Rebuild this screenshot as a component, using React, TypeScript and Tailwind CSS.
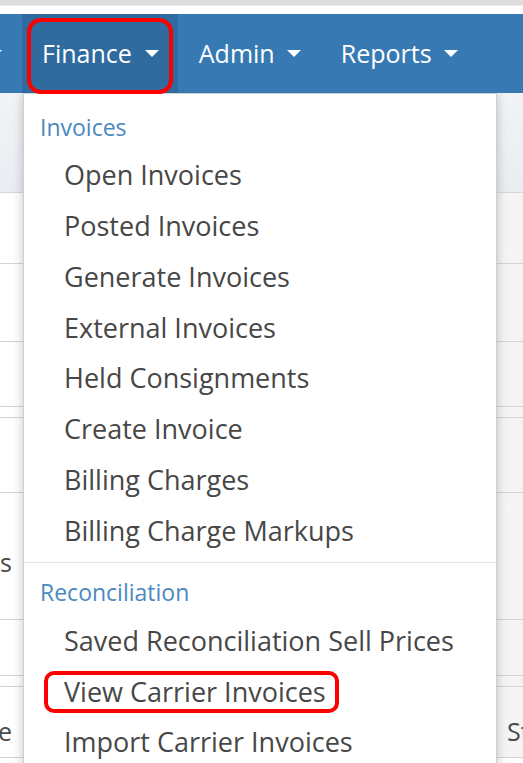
import React from 'react'

const invoiceItems = [
  'Open Invoices',
  'Posted Invoices',
  'Generate Invoices',
  'External Invoices',
  'Held Consignments',
  'Create Invoice',
  'Billing Charges',
  'Billing Charge Markups',
]

const reconciliationItems = [
  'Saved Reconciliation Sell Prices',
  'View Carrier Invoices',
  'Import Carrier Invoices',
]

// background table rows behind the menu
const rows: Array<{ h: string; left?: string; right?: string }> = [
  { h: 'h-[71px]' },
  { h: 'h-[78px]' },
  { h: 'h-[65px]' },
  { h: 'h-[11px]' },
  { h: 'h-[75px]' },
  { h: 'h-[127px] pt-[14px]', left: 'Charges' },
  { h: 'h-[56px]' },
  { h: 'h-[11px]' },
  { h: 'h-[71px] pt-[20px]', left: 'Price', right: 'Status' },
]

function Caret() {
  return <span className="inline-block w-0 h-0 border-x-[7px] border-x-transparent border-t-[7px] border-t-white" />
}

export default function App() {
  return (
    <div className="relative w-[523px] h-[763px] overflow-hidden bg-white font-['Open_Sans',sans-serif]">
      {/* browser chrome strip */}
      <div className="h-[5px] bg-[#dedede]" />
      <div className="h-[9px] bg-white border-t border-[#ececec]" />

      {/* navbar */}
      <div className="relative z-30 h-[79px] bg-[#377ab3] flex items-stretch text-white text-[25px] ml-[-12px]">
        <div className="flex items-center pr-[20px]">
          <Caret />
        </div>
        <div className="relative flex items-center gap-[13px] pl-[20px] pr-[19px] bg-[#2f6b9e]">
          <span>Finance</span>
          <Caret />
          <div className="absolute left-[5px] right-[5px] top-[4px] bottom-[-1px] border-4 border-[#ff0000] rounded-[14px]" />
        </div>
        <div className="flex items-center gap-[12px] pl-[21px] pr-[20px]">
          <span>Admin</span>
          <Caret />
        </div>
        <div className="flex items-center gap-[12px] px-[20px]">
          <span>Reports</span>
          <Caret />
        </div>
      </div>

      {/* table underneath */}
      <div className="h-[100px] bg-gradient-to-b from-[#f1f3f6] to-[#e9ecf1] border-b border-[#d6d8dc]" />
      {rows.map((r, i) => (
        <div key={i} className={`${r.h} flex border-b border-[#d4d4d4] bg-gradient-to-r from-white to-[#f4f4f4] text-[25px] text-[#4a4a4a]`}>
          <div className="w-[12px] shrink-0 flex items-center justify-end whitespace-nowrap">
            {r.left && <span>{r.left}</span>}
          </div>
          <div className="flex-1" />
          <div className="w-[16px] shrink-0 flex items-center whitespace-nowrap overflow-hidden">
            {r.right && <span>{r.right}</span>}
          </div>
        </div>
      ))}

      {/* dropdown menu */}
      <div className="absolute z-20 left-[23px] top-[93px] w-[474px] h-[700px] bg-white border border-[#cfcfcf] shadow-[0_0_10px_rgba(0,0,0,0.22)] pt-[10px]">
        <div className="h-[46px] flex items-center pl-[16px] text-[23px] text-[#4a89c0]">Invoices</div>
        {invoiceItems.map(item => (
          <div key={item} className="h-[50.8px] flex items-center pl-[40px] text-[27px] text-[#474747]">
            {item}
          </div>
        ))}
        <div className="my-[6px] h-px bg-[#e5e5e5]" />
        <div className="h-[46px] flex items-center pl-[16px] text-[23px] text-[#4a89c0]">Reconciliation</div>
        {reconciliationItems.map(item => (
          <div key={item} className="h-[50.8px] flex items-center pl-[40px] text-[27px] text-[#474747]">
            <span className="relative leading-[34px]">
              {item}
              {item === 'View Carrier Invoices' && (
                <span className="absolute left-[-20px] right-[-13px] top-[-4px] bottom-[-4px] border-4 border-[#ff0000] rounded-[10px]" />
              )}
            </span>
          </div>
        ))}
      </div>
    </div>
  )
}
